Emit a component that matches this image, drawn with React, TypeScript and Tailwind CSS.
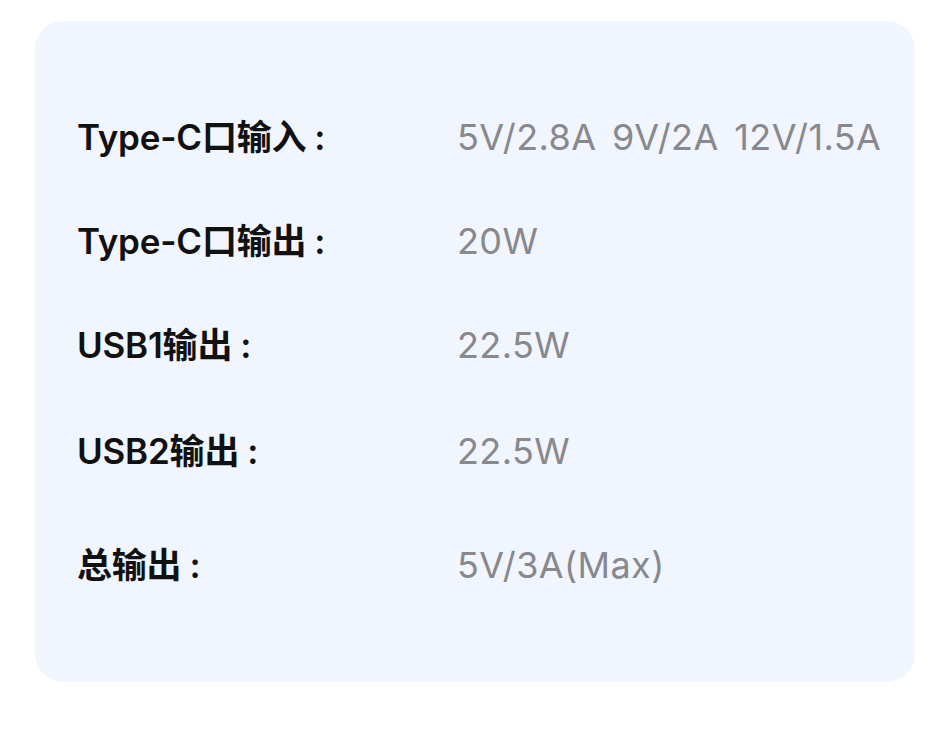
import React from "react"

const specs = [
  { label: "Type-C口输入", value: "5V/2.8A 9V/2A 12V/1.5A", gap: "" },
  { label: "Type-C口输出", value: "20W", gap: "mt-[56px]" },
  { label: "USB1输出", value: "22.5W", gap: "mt-[56px]" },
  { label: "USB2输出", value: "22.5W", gap: "mt-[58px]" },
  { label: "总输出", value: "5V/3A(Max)", gap: "mt-[66px]" },
]

export default function App() {
  return (
    <div className="w-[950px] h-[752px] bg-white pt-[21px] px-[35px] font-['Inter','Noto_Sans_CJK_SC',sans-serif]">
      <div className="w-[880px] h-[661px] bg-[#f0f5fe] rounded-[28px] pt-[92px] pl-[42px] flex flex-col">
        {specs.map((s) => (
          <div key={s.label} className={`flex items-center h-[48px] ${s.gap}`}>
            <div className="w-[380px] shrink-0 text-[35px] font-semibold text-[#111111] tracking-[-0.2px] whitespace-nowrap">
              {s.label}
              <span className="ml-[8px]">:</span>
            </div>
            <div className="text-[36px] text-[#88888d] tracking-[0.4px] [word-spacing:5px] whitespace-nowrap">{s.value}</div>
          </div>
        ))}
      </div>
    </div>
  )
}
